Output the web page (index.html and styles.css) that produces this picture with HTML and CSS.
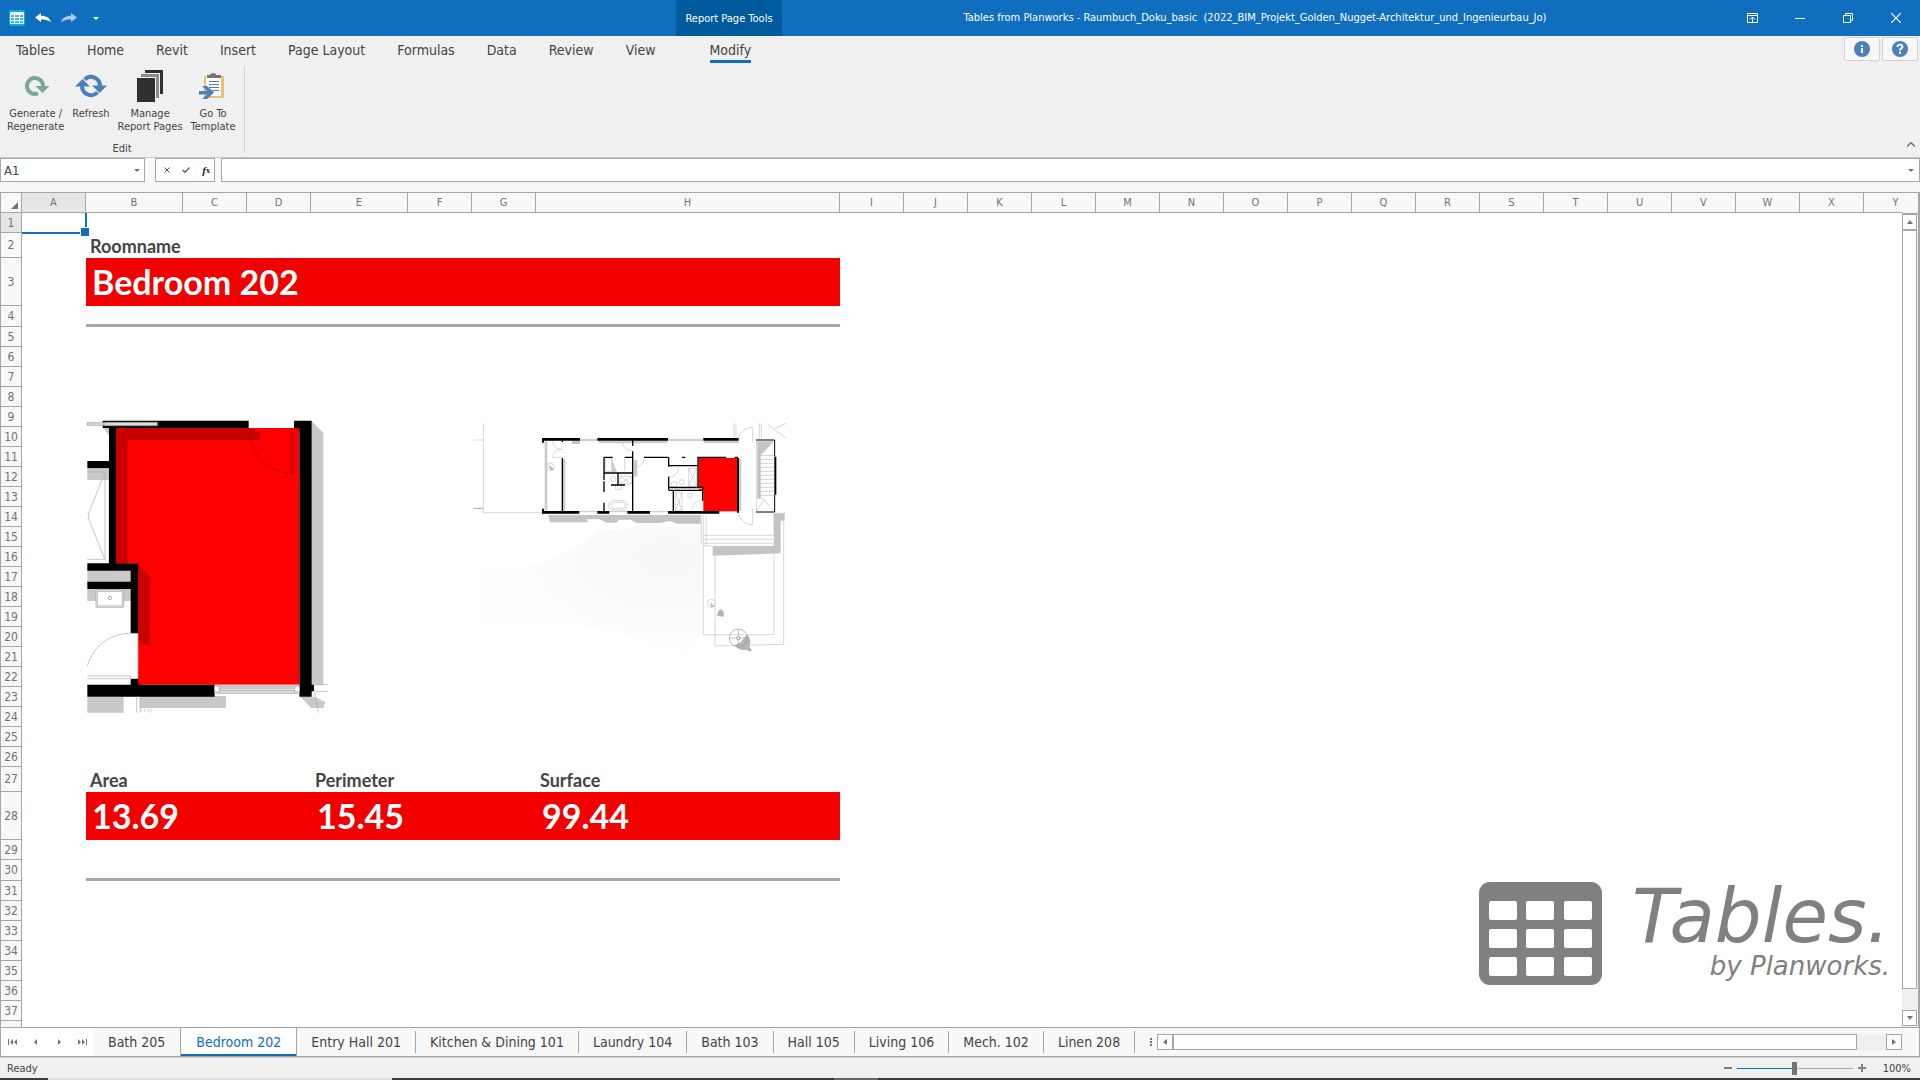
FILE: index.html
```html
<!DOCTYPE html>
<html lang="en">
<head>
    <meta charset="UTF-8">
    <meta name="viewport" content="width=device-width, initial-scale=1.0">
    <title>Tables from Planworks</title>
    <link rel="stylesheet" href="styles.css">
</head>
<body>
    <header class="title-bar">
        <div class="quick-access">
            <svg class="app-icon" width="16" height="16" viewBox="0 0 16 16">
                <rect width="16" height="16" rx="2" fill="#00aeef"/>
                <rect x="1" y="2" width="14" height="12" rx="1" fill="#fff"/>
                <path d="M2 5h3v2H2zM6 5h4v2H6zM11 5h3v2h-3zM2 8h3v2H2zM6 8h4v2H6zM11 8h3v2h-3zM2 11h3v2H2zM6 11h4v2H6zM11 11h3v2h-3z" fill="#35b9ea"/>
            </svg>
            <button class="bar-button" aria-label="Undo">
                <svg width="16" height="10" viewBox="0 0 16 10"><path d="M0 4.5 6 0v2.700c5 0 9 2 10 6.800C13.500 7 10 6.500 6 6.500V9z" fill="#fff"/></svg>
            </button>
            <button class="bar-button" aria-label="Redo">
                <svg width="16" height="10" viewBox="0 0 16 10"><path d="M16 4.500 10 0v2.700C5 2.700 1 4.700 0 9.500 2.500 7 6 6.500 10 6.500V9z" fill="#a9cdee"/></svg>
            </button>
            <button class="bar-button more-button" aria-label="Customize">
                <svg width="6" height="3" viewBox="0 0 6 3"><path d="M0 0h6L3 3z" fill="#fff"/></svg>
            </button>
        </div>
        <div class="context-title">Report Page Tools</div>
        <h1 class="window-title">Tables from Planworks - Raumbuch_Doku_basic &nbsp;(2022_BIM_Projekt_Golden_Nugget-Architektur_und_Ingenieurbau_Jo)</h1>
        <div class="window-buttons">
            <button aria-label="Ribbon display options">
                <svg width="11" height="10" viewBox="0 0 11 10" fill="none" stroke="#fff"><path d="M.5.5h10v9H.5zM.5 2.500h10M5.500 9V4M3 6.500 5.500 4 8 6.500"/></svg>
            </button>
            <button aria-label="Minimize">
                <svg width="10" height="10" viewBox="0 0 10 10"><path d="M0 5h10v1H0z" fill="#fff"/></svg>
            </button>
            <button aria-label="Restore">
                <svg width="10" height="10" viewBox="0 0 10 10" fill="none" stroke="#fff"><path d="M.5 2.500h7v7h-7zM2.500 2.500v-2h7v7h-2"/></svg>
            </button>
            <button aria-label="Close">
                <svg width="10" height="10" viewBox="0 0 10 10" fill="none" stroke="#fff" stroke-width="1.200"><path d="M0 0l10 10M10 0 0 10"/></svg>
            </button>
        </div>
    </header>

    <nav class="ribbon-tabs">
        <button>Tables</button>
        <button>Home</button>
        <button>Revit</button>
        <button>Insert</button>
        <button>Page Layout</button>
        <button>Formulas</button>
        <button>Data</button>
        <button>Review</button>
        <button>View</button>
        <button class="active"><span>Modify</span></button>
        <div class="help-buttons">
            <button aria-label="Info">
                <svg width="16" height="16" viewBox="0 0 16 16"><circle cx="8" cy="8" r="8" fill="#4a81bd"/><path d="M7 4h2v2H7zM7 7h2v5H7z" fill="#fff"/></svg>
            </button>
            <button aria-label="Help">
                <svg width="16" height="16" viewBox="0 0 16 16"><circle cx="8" cy="8" r="8" fill="#4a81bd"/><path d="M5.500 6c0-3 5-3 5-.3C10.500 7.500 8 7.300 8 9.500" fill="none" stroke="#fff" stroke-width="1.900"/><path d="M7 10.700h2v2H7z" fill="#fff"/></svg>
            </button>
        </div>
    </nav>

    <section class="ribbon">
        <div class="ribbon-group">
            <div class="ribbon-items">
                <button>
                    <svg width="32" height="32" viewBox="0 0 32 32">
                        <path d="M18 23.400A8 8 0 1 1 23 16" fill="none" stroke="#78a895" stroke-width="4"/>
                        <path d="M15.500 16h14l-7 7z" fill="#78a895"/>
                    </svg>
                    Generate /<br>Regenerate
                </button>
                <button>
                    <svg width="32" height="32" viewBox="0 0 32 32">
                        <path d="M9.600 9.600A9 9 0 0 1 25 16M22.400 22.400A9 9 0 0 1 7 16" fill="none" stroke="#4a81bd" stroke-width="4"/>
                        <path d="M17 15.500h15L24.500 23zM0 16.500h15L7.500 9z" fill="#4a81bd"/>
                    </svg>
                    Refresh
                </button>
                <button>
                    <svg width="32" height="32" viewBox="0 0 32 32">
                        <path d="M11 0h18v24h-3V3H11z" fill="#303030"/>
                        <path d="M7 4h18v24h-3V7H7z" fill="#8c8c8c"/>
                        <path d="M3 8h18v24H3z" fill="#303030"/>
                    </svg>
                    Manage<br>Report Pages
                </button>
                <button>
                    <svg width="32" height="32" viewBox="0 0 32 32">
                        <path d="M7 6h20v22H7z" fill="#edc16f"/>
                        <path d="M9 6h15v20H9z" fill="#fff"/>
                        <path d="M10 5h3c0-2 5-2 6-1v1h5v3H10z" fill="#737373"/>
                        <path d="M12 11.500h10M12 14.500h10M12 17.500h10M15 20.500h7" stroke="#4a81bd"/>
                        <path d="M2 21h8l-5-5h5l7 6.500-7 6.500H5l5-4.500H2z" fill="#4a81bd"/>
                    </svg>
                    Go To<br>Template
                </button>
            </div>
            <div class="group-label">Edit</div>
        </div>
        <button class="collapse-button" aria-label="Collapse ribbon">
            <svg width="8" height="5" viewBox="0 0 8 5"><path d="M0 4.500 4 .8l4 3.700" fill="none" stroke="#737373" stroke-width="1.500"/></svg>
        </button>
    </section>

    <section class="formula-bar">
        <div class="field name-box">
            <input type="text" value="A1" aria-label="Name box">
            <button aria-label="Show names"><svg width="6" height="3" viewBox="0 0 6 3"><path d="M0 0h6L3 3z" fill="#737373"/></svg></button>
        </div>
        <div class="field formula-buttons">
            <button aria-label="Cancel"><svg width="6" height="6" viewBox="0 0 6 6"><path d="M.5.5l5 5M5.500.5l-5 5" stroke="#555"/></svg></button>
            <button aria-label="Enter"><svg width="8" height="6" viewBox="0 0 8 6"><path d="M.5 3 3 5.200 7.500.5" fill="none" stroke="#555" stroke-width="1.300"/></svg></button>
            <button class="fx" aria-label="Insert function"><i>f</i><sub>x</sub></button>
        </div>
        <div class="field formula-input">
            <input type="text" aria-label="Formula">
            <button aria-label="Expand"><svg width="6" height="3" viewBox="0 0 6 3"><path d="M0 0h6L3 3z" fill="#737373"/></svg></button>
        </div>
    </section>

    <main class="workspace">
        <div class="sheet">
            <table class="grid">
                <colgroup id="grid-columns"></colgroup>
                <thead><tr id="grid-head"></tr></thead>
                <tbody id="grid-body"></tbody>
            </table>

            <svg class="picture room-plan" width="265" height="330" viewBox="45 0 795 990">
                <path d="M725 64l35 35v755h-35zM52 512h132v34H52zM52 567h132v36H52zM52 206h65v34H52zM52 890h109v48H52zM210 888h258v36H210zM690 890h42l34 16-6 18h-36zM100 84h17v22z" fill="#c9c9c9"/>
                <path d="M52 240h53v238H52zM78 570h83v52H78z" fill="#fff"/>
                <path d="M52 216h53v262H52M104 218 56 340v16l48 122M56 340h-4M56 356h-4M117 206v284" fill="none" stroke="#aaa" stroke-width="2"/>
                <path d="M78 570h83v52H78zM82 574h75v44H82z" fill="none" stroke="#999" stroke-width="2"/>
                <circle cx="120" cy="594" r="5" fill="none" stroke="#888" stroke-width="2"/>
                <path d="M138 84h550v770H204V490h-66z" fill="red"/>
                <path d="M138 84h400l32 14v22H173v370h-35zM204 492l35 36v208h-17l-18-20zM204 840l12 14h-12zM674 84h14v12z" fill="#c80000"/>
                <path d="M536 84c0 76 56 136 136 136V84M664 84v136" fill="none" stroke="#9a0000" stroke-width="2"/>
                <path d="M98 62h438v22H138v406h66v210h-22V567H52v-22h130v-33H52v-22h65V205H52v-22h65V84H98zM672 62h53v792h7v20h-7v16h-37V84h-16zM182 836h22v18h230v36H52v-36h130z" fill="#000"/>
                <path d="M52 68h50v8H52zM102 67h160v10H102z" fill="#ddd" stroke="#999" stroke-width="2"/>
                <path d="M52 798c18-58 64-98 130-98h22v136M52 828h130v8H52M200 890v48M210 890v48M732 854h42M732 874h42M734 876l12 62" fill="none" stroke="#aaa" stroke-width="2"/>
                <path d="M434 854h254v26H434z" fill="#e4e4e4"/>
                <path d="M440 858h242M450 864h226v8H450zM440 880h242" fill="none" stroke="#999" stroke-width="2"/>
                <path d="M434 858h14v18h-14zM674 858h14v18h-14z" fill="#fff" stroke="#999" stroke-width="2"/>
                <path d="M215 926v10M224 926v10M234 926v10M243 926v12" stroke="#ccc" stroke-width="3"/>
            </svg>

            <svg class="picture floor-plan" width="340" height="290" viewBox="0 0 1020 870">
                <defs>
                    <radialGradient id="terrain" cx="0.850" cy="0.250" r="0.800">
                        <stop offset="0" stop-color="#f7f7f7"/>
                        <stop offset="1" stop-color="#fefefe"/>
                    </radialGradient>
                </defs>
                <path d="M46 500l80 10 120-20 90-45 80-50 120-15h190v340l-60 40-180-60-160-30-280 10z" fill="url(#terrain)"/>
                <path d="M264 345h458v26H650l-20-8-30 6H530l-18-10h-36l-6 9h-30l-22-10h-38l4 9H270zM758 438h184V340h32v22h-12v98l-204 7zM900 124h42l-40 42v130h-10V124zM336 122h24v10h-24z" fill="#c4c4c4"/>
                <path d="M254 124h8v208h-8zM306 176h10v158h-10zM455 176l16 40h-16zM416 122h206v8H416zM732 122h104v8H732zM522 180h10v50h-10zM836 176h8v158h-8z" fill="#ccc"/>
                <path d="M716 174h116v160H730V272h-14z" fill="red"/>
                <path d="M800 174c0 18 12 28 30 28" fill="none" stroke="#900" stroke-width="2"/>
                <g fill="none" stroke="#c4c4c4" stroke-width="2">
                    <path d="M70 70v268h176M40 120h30M822 70v46M828 70v46M898 70v46M904 70v46M924 74l54 40M944 86l34-16M890 120v216M896 130v160M948 340h30"/>
                    <path d="M278 122c0 16 12 26 28 26M306 148c-16 0-28 10-28 24h28M488 126c0 16 12 26 30 26M524 202c16 0 28-12 28-28M836 116c0-18 16-32 42-34v46M836 340c4 20 20 34 42 34v-50M628 230c18 0 28-12 28-28M698 328c0-18 14-26 30-26"/>
                    <path d="M436 176h20v38h-20zM494 176v36M480 228h34v24h-34zM480 228l34 24M514 228l-34 24M686 204h24v54h-24zM686 204l24 54M710 204l-24 54M646 278h20v54h-20zM646 278l20 54M666 278l-20 54M634 246h16v14h-16zM466 256h18v12h-18z"/>
                    <path d="M724 344v86M730 344v360h212V340M738 344v94M730 406h210M730 418h210M730 430h210M730 438h28M765 438v300l206-5V360M948 344v86"/>
                    <rect x="446" y="302" width="56" height="28" rx="13"/>
                    <rect x="452" y="307" width="44" height="18" rx="9"/>
                    <circle cx="270" cy="200" r="11"/><circle cx="460" cy="237" r="8"/><circle cx="665" cy="246" r="7"/><circle cx="690" cy="286" r="7"/><circle cx="754" cy="610" r="12"/>
                </g>
                <path d="M902 166h40M902 178h40M902 190h40M902 202h40M902 214h40M902 226h40M902 238h40M902 250h40M902 262h40M902 274h40M902 286h40M902 290l40 42M890 332l20-30" stroke="#bbb" stroke-width="2"/>
                <path d="M266 196l16 12-6 4-10-10zM750 606l14 14-10 2zM772 648c-2-20 18-30 20-4v6zM860 704c14 10 12 26 8 36l8 10-6 5-10-6c-14 4-28-2-36-14l18-8z" fill="#b5b5b5"/>
                <circle cx="835" cy="714" r="27" fill="none" stroke="#999" stroke-width="2"/>
                <path d="M808 714h54M835 688v54" stroke="#aaa" stroke-width="2"/>
                <circle cx="835" cy="714" r="5" fill="#fff" stroke="#777" stroke-width="2"/>
                <path d="M360 118h52M360 122h52M624 118h106M624 122h106M358 335h56M448 335h54M570 335h54M778 335h58" stroke="#aaa" stroke-width="2"/>
                <path d="M40 325h30" stroke="#777" stroke-width="2"/>
                <g fill="none" stroke="#000">
                    <path d="M246 118h114M412 118h212M730 118h106M246 337h112M412 337h36M502 337h68M624 337h154" stroke-width="8"/>
                    <path d="M249 114v14M249 326v14M834 174v164M946 170v114" stroke-width="6"/>
                    <path d="M518 120v18M518 154v182M307 122v4M307 174v160M432 172v68M432 244v32M432 308v30M432 172h26M494 172h26M432 219h86M474 219v36M453 255h42M552 172h72M626 172v28M626 197h88M714 172v90M626 230v40M626 262h104M626 271h104M728 262v40M640 271v64M712 172h86M824 172h10M666 172h10" stroke-width="4"/>
                    <path d="M888 120h56v50M944 284v52h-56" stroke-width="3"/>
                </g>
                <path d="M628 266h98" stroke="#bbb" stroke-width="3"/>
            </svg>

            <div class="brand">
                <svg width="123" height="103" viewBox="0 0 123 103">
                    <rect width="123" height="103" rx="11" fill="#808080"/>
                    <g fill="#fff">
                        <rect x="10" y="19" width="28" height="19" rx="2"/><rect x="47" y="19" width="28" height="19" rx="2"/><rect x="85" y="19" width="28" height="19" rx="2"/>
                        <rect x="10" y="47" width="28" height="19" rx="2"/><rect x="47" y="47" width="28" height="19" rx="2"/><rect x="85" y="47" width="28" height="19" rx="2"/>
                        <rect x="10" y="75" width="28" height="19" rx="2"/><rect x="47" y="75" width="28" height="19" rx="2"/><rect x="85" y="75" width="28" height="19" rx="2"/>
                    </g>
                </svg>
                <div class="brand-text">
                    <div class="brand-name">Tables.</div>
                    <div class="brand-owner">by Planworks.</div>
                </div>
            </div>
        </div>
        <div class="scroll-y">
            <button aria-label="Scroll up"><svg width="6" height="4" viewBox="0 0 6 4"><path d="M0 4h6L3 0z" fill="#737373"/></svg></button>
            <div class="thumb"></div>
            <button aria-label="Scroll down"><svg width="6" height="4" viewBox="0 0 6 4"><path d="M0 0h6L3 4z" fill="#737373"/></svg></button>
        </div>
    </main>

    <nav class="sheet-bar">
        <div class="sheet-nav">
            <button aria-label="First sheet"><svg width="10" height="6" viewBox="0 0 10 6"><path d="M0 0h1v6H0zM5 0v6L2 3zM9 0v6L6 3z" fill="#737373"/></svg></button>
            <button aria-label="Previous sheet"><svg width="10" height="6" viewBox="0 0 10 6"><path d="M6 0v6L3 3z" fill="#737373"/></svg></button>
            <button aria-label="Next sheet"><svg width="10" height="6" viewBox="0 0 10 6"><path d="M4 0v6l3-3z" fill="#737373"/></svg></button>
            <button aria-label="Last sheet"><svg width="10" height="6" viewBox="0 0 10 6"><path d="M9 0h1v6H9zM5 0v6l3-3zM1 0v6l3-3z" fill="#737373"/></svg></button>
        </div>
        <div class="sheet-tabs">
            <button class="first">Bath 205</button>
            <button class="active">Bedroom 202</button>
            <button>Entry Hall 201</button>
            <button>Kitchen &amp; Dining 101</button>
            <button>Laundry 104</button>
            <button>Bath 103</button>
            <button>Hall 105</button>
            <button>Living 106</button>
            <button>Mech. 102</button>
            <button>Linen 208</button>
        </div>
        <svg class="splitter" width="2" height="8" viewBox="0 0 2 8"><path d="M0 0h2v2H0zM0 3h2v2H0zM0 6h2v2H0z" fill="#737373"/></svg>
        <div class="scroll-x">
            <button aria-label="Scroll left"><svg width="4" height="6" viewBox="0 0 4 6"><path d="M4 0v6L0 3z" fill="#737373"/></svg></button>
            <div class="thumb"></div>
            <button aria-label="Scroll right"><svg width="4" height="6" viewBox="0 0 4 6"><path d="M0 0v6l4-3z" fill="#737373"/></svg></button>
        </div>
    </nav>

    <footer class="status-bar">
        <span class="status">Ready</span>
        <button aria-label="Zoom out"><svg width="8" height="8" viewBox="0 0 8 8"><path d="M0 3h8v2H0z" fill="#808080"/></svg></button>
        <input class="zoom" type="range" min="0" max="100" value="50" aria-label="Zoom">
        <button aria-label="Zoom in"><svg width="8" height="8" viewBox="0 0 8 8"><path d="M0 3h3V0h2v3h3v2H5v3H3V5H0z" fill="#808080"/></svg></button>
        <span class="zoom-value">100%</span>
    </footer>
    <div class="taskbar-edge"></div>

    <script src="script.js"></script>
</body>
</html>
```
FILE: styles.css
```css
* {
    box-sizing: border-box;
}

body {
    margin: 0;
    height: 100vh;
    display: flex;
    flex-direction: column;
    overflow: hidden;
    font-family: "DejaVu Sans Condensed", Tahoma, sans-serif;
    font-size: 11px;
    color: #444;
    background: #fff;
}

button {
    font: inherit;
    color: inherit;
    background: none;
    border: none;
    padding: 0;
    margin: 0;
    display: flex;
    align-items: center;
    justify-content: center;
}

input[type="text"] {
    font: inherit;
    color: inherit;
    border: none;
    outline: none;
    background: none;
    padding: 0;
    flex: 1;
    min-width: 0;
}

svg {
    display: block;
    flex: none;
}

/* title bar */
.title-bar {
    height: 36px;
    flex: none;
    display: flex;
    background: #106ebe;
    color: #fff;
}

.quick-access {
    width: 676px;
    display: flex;
    align-items: center;
    gap: 10px;
    padding-left: 9px;
}

.more-button {
    margin-left: 6px;
}

.context-title {
    width: 106px;
    display: flex;
    align-items: center;
    justify-content: center;
    background: #005a9e;
}

.window-title {
    flex: 1;
    margin: 0;
    font-size: 11px;
    font-weight: normal;
    line-height: 36px;
    text-align: center;
}

.window-buttons {
    display: flex;
}

.window-buttons button {
    width: 48px;
}

/* ribbon */
.ribbon-tabs {
    height: 28px;
    flex: none;
    display: flex;
    background: #f0f0f0;
    font-size: 14px;
}

.ribbon-tabs > button {
    padding: 0 16px;
}

.ribbon-tabs > .active {
    margin-left: 22px;
}

.active span {
    border-bottom: 3px solid #106ebe;
    margin-top: 3px;
    line-height: 20px;
}

.help-buttons {
    margin-left: auto;
    display: flex;
    gap: 2px;
    padding: 1px 2px 0 0;
}

.help-buttons button {
    width: 36px;
    height: 24px;
    background: #f8f8f8;
    border: 1px solid #d2d2d2;
    border-radius: 2px;
}

.ribbon {
    height: 94px;
    flex: none;
    display: flex;
    justify-content: space-between;
    background: #f0f0f0;
    border-bottom: 1px solid #c8c8c8;
    padding-top: 2px;
}

.ribbon-group {
    width: 245px;
    height: 87px;
    display: flex;
    flex-direction: column;
    justify-content: space-between;
    border-right: 1px solid #d2d2d2;
}

.ribbon-items {
    display: flex;
    align-items: flex-start;
    gap: 8px;
    padding: 4px 7px 0;
}

.ribbon-items button {
    flex-direction: column;
    line-height: 13px;
    text-align: center;
    white-space: nowrap;
}

.ribbon-items svg {
    margin-bottom: 5px;
}

.group-label {
    text-align: center;
    line-height: 8px;
}

.collapse-button {
    align-self: flex-end;
    padding: 10px 5px;
}

/* formula bar */
.formula-bar {
    height: 34px;
    flex: none;
    display: flex;
    background: #f8f8f8;
}

.field {
    height: 24px;
    display: flex;
    align-items: center;
    background: #fff;
    border: 1px solid #a6a6a6;
    font-size: 13px;
}

.name-box {
    width: 145px;
    padding: 0 4px 0 3px;
    margin-right: 10px;
}

.formula-buttons {
    width: 60px;
    margin-right: 6px;
    justify-content: space-between;
    padding: 0 4px 0 8px;
}

.fx {
    font: bold 11px "Liberation Serif", serif;
    color: #222;
}

.fx sub {
    font-size: 8px;
}

.formula-input {
    flex: 1;
    padding: 0 5px;
}

/* sheet */
.workspace {
    flex: 1;
    min-height: 0;
    display: flex;
    position: relative;
    border: 1px solid #a6a6a6;
    border-width: 1px 2px 1px 1px;
}

.sheet {
    flex: 1;
    min-width: 0;
    position: relative;
    overflow: hidden;
}

.grid {
    width: 1927px;
    table-layout: fixed;
    border-collapse: separate;
    border-spacing: 0;
}

.grid th {
    padding: 0;
    font-size: 12px;
    line-height: 14px;
    font-weight: normal;
    color: #737373;
    background: #f8f8f8;
    border-right: 1px solid #a6a6a6;
    border-bottom: 1px solid #a6a6a6;
}

.grid thead th {
    height: 20px;
    font-size: 11px;
}

.grid td {
    padding: 0;
    font-family: Lato, sans-serif;
    font-size: 18px;
    font-weight: bold;
    line-height: 20px;
    white-space: nowrap;
}

.grid .selected {
    background: #e6e6e6;
}

.corner svg {
    margin: 6px 3px 0 auto;
}

.grid .label {
    padding-left: 4px;
}

.grid .value {
    padding-left: 6px;
    font-size: 34px;
    line-height: 40px;
    color: #fff;
    background: #f20000;
}

.rule {
    border-bottom: 3px solid #a6a6a6;
}

.cell-active {
    position: relative;
}

.cell-active::before {
    content: "";
    position: absolute;
    inset: 0 -1px -1px 0;
    border: solid #106ebe;
    border-width: 0 2px 2px 0;
}

.cell-active::after {
    content: "";
    position: absolute;
    right: -4px;
    bottom: -4px;
    width: 8px;
    height: 8px;
    background: #106ebe;
    border: 1px solid #fff;
}

.picture {
    position: absolute;
}

.room-plan {
    left: 84px;
    top: 207px;
}

.floor-plan {
    left: 459px;
    top: 207px;
}

.brand {
    position: absolute;
    right: 12px;
    bottom: 42px;
    display: flex;
    gap: 30px;
    color: #808080;
    font-family: "DejaVu Sans", sans-serif;
    font-style: italic;
}

.brand-text {
    text-align: right;
}

.brand-name {
    font-size: 74px;
    line-height: 68px;
}

.brand-owner {
    font-size: 26px;
    line-height: 32px;
}

.scroll-y {
    width: 16px;
    margin-top: 20px;
    padding: 1px 1px 1px 0;
    display: flex;
    flex-direction: column;
    background: #f0f0f0;
}

/* column headers run on above the scroll bar */
.workspace::after {
    content: "";
    position: absolute;
    top: 0;
    right: 0;
    width: 16px;
    height: 20px;
    background: #f8f8f8;
    border-bottom: 1px solid #a6a6a6;
}

.scroll-y button,
.scroll-x button {
    width: 16px;
    height: 16px;
    background: #fff;
    border: 1px solid #a6a6a6;
}

.scroll-y button {
    width: 15px;
}

.thumb {
    background: #fff;
    border: 1px solid #a6a6a6;
}

.scroll-y .thumb {
    flex: 1;
    margin-bottom: 21px;
}

/* sheet tabs */
.sheet-bar {
    height: 29px;
    flex: none;
    display: flex;
    align-items: center;
    background: #f8f8f8;
    border: 1px solid #a6a6a6;
    border-width: 0 1px 1px 1px;
}

.sheet-nav {
    align-self: stretch;
    width: 92px;
    display: flex;
    align-items: center;
    justify-content: space-around;
    background: #fff;
}

.sheet-tabs {
    display: flex;
    font-size: 14px;
}

.sheet-tabs button {
    height: 22px;
    padding: 0 14px;
    white-space: nowrap;
    border-right: 1px solid #a6a6a6;
}

.sheet-tabs .first {
    padding: 0 15px;
    border-right: none;
}

.sheet-tabs .active {
    height: 28px;
    margin: -3px 0;
    padding: 0 15px;
    color: #106ebe;
    background: #fff;
    border: 1px solid #a6a6a6;
    border-width: 0 1px;
    box-shadow: inset 0 -2px #106ebe;
}

.splitter {
    margin: 0 5px 0 15px;
}

.scroll-x {
    flex: 1;
    display: flex;
    background: #f0f0f0;
    margin-right: 17px;
}

.scroll-x .thumb {
    flex: 1;
    margin-right: 29px;
}

/* status bar */
.status-bar {
    height: 21px;
    flex: none;
    display: flex;
    align-items: center;
    gap: 5px;
    padding: 0 9px 0 7px;
    background: #f0f0f0;
    border-top: 1px solid #d2d2d2;
}

.status {
    margin-right: auto;
}

.zoom {
    appearance: none;
    width: 116px;
    height: 13px;
    margin: 0;
    background: linear-gradient(90deg, #106ebe 50%, #a6a6a6 50%) center / 100% 1px no-repeat;
}

.zoom::-webkit-slider-thumb {
    appearance: none;
    width: 5px;
    height: 13px;
    background: #737373;
}

.zoom-value {
    margin-left: 12px;
}

.taskbar-edge {
    height: 2px;
    flex: none;
    background: linear-gradient(90deg, #3c3c3c 48px, #dcdcdc 48px, #dcdcdc 392px, #3c3c3c 392px, #3c3c3c 834px, #666 834px, #666 878px, #3c3c3c 878px);
}
```
FILE: script.js
```js
const columnWidths = { A: 64, B: 97, C: 64, D: 64, E: 97, F: 64, G: 64, H: 304 };
const rowHeights = { 2: 25, 3: 48, 4: 21, 27: 25, 28: 48, 30: 21 };
const letters = 'ABCDEFGHIJKLMNOPQRSTUVWXY'.split('');
const lastRow = 37;

// column A comes first in every row, then these cells
const rowCells = {
    2: '<td class="label" colspan="7">Roomname</td>',
    3: '<td class="value" colspan="7">Bedroom 202</td>',
    4: '<td class="rule" colspan="7"></td>',
    27: '<td class="label" colspan="3">Area</td><td class="label" colspan="3">Perimeter</td><td class="label">Surface</td>',
    28: '<td class="value" colspan="3">13.69</td><td class="value" colspan="3">15.45</td><td class="value">99.44</td>',
    30: '<td class="rule" colspan="7"></td>'
};

let columns = '<col style="width: 21px">';
let head = '<th class="corner"><svg width="7" height="7" viewBox="0 0 7 7"><path d="M7 0v7H0z" fill="#737373"/></svg></th>';
letters.forEach(letter => {
    columns += `<col style="width: ${columnWidths[letter] || 64}px">`;
    head += `<th${letter === 'A' ? ' class="selected"' : ''}>${letter}</th>`;
});
document.getElementById('grid-columns').innerHTML = columns;
document.getElementById('grid-head').innerHTML = head;

let body = '';
for (let row = 1; row <= lastRow; row++) {
    const cells = rowCells[row] || '<td colspan="7"></td>';
    body += `<tr style="height: ${rowHeights[row] || 20}px">
        <th${row === 1 ? ' class="selected"' : ''}>${row}</th>
        <td${row === 1 ? ' class="cell-active"' : ''}></td>${cells}<td colspan="17"></td></tr>`;
}
// the next row only peeks in above the sheet tabs
body += '<tr style="height: 20px"><th></th><td colspan="25"></td></tr>';
document.getElementById('grid-body').innerHTML = body;
```
